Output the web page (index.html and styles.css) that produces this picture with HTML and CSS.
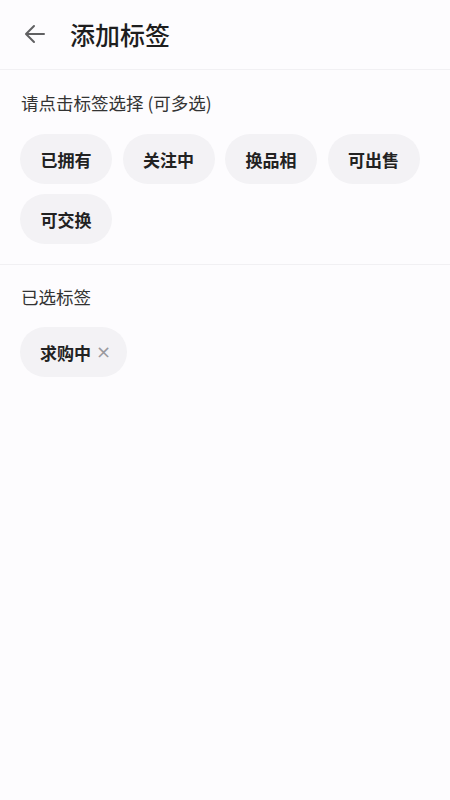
FILE: index.html
```html
<!DOCTYPE html>
<html lang="zh">
<head>
<meta charset="utf-8">
<link rel="stylesheet" href="styles.css">
</head>
<body>
<div class="page">
  <header class="header">
    <svg class="back" width="24" height="24" viewBox="0 0 24 24" fill="none" stroke="#606062" stroke-width="2" stroke-linecap="round" stroke-linejoin="round">
      <path d="M21 12H3.5M11 4l-8 8 8 8"/>
    </svg>
    <h1 class="title">添加标签</h1>
  </header>
  <section class="section">
    <div class="label">请点击标签选择 (可多选)</div>
    <div class="chips">
      <span class="chip">已拥有</span>
      <span class="chip">关注中</span>
      <span class="chip">换品相</span>
      <span class="chip">可出售</span>
      <span class="chip">可交换</span>
    </div>
  </section>
  <section class="section">
    <div class="label label2">已选标签</div>
    <div class="chips">
      <span class="chip chip-selected">求购中<span class="close">×</span></span>
    </div>
  </section>
</div>
</body>
</html>
```
FILE: styles.css
```css
html, body {
  margin: 0;
  padding: 0;
  background: #fdfcfe;
}
body {
  font-family: "Noto Sans CJK SC", "Noto Sans", sans-serif;
  color: #222;
}
.page {
  width: 450px;
  min-height: 800px;
}
.header {
  height: 70px;
  display: flex;
  align-items: center;
  border-bottom: 1px solid #f1f0f3;
  box-sizing: border-box;
  padding-left: 23px;
}
.back {
  width: 24px;
  height: 24px;
  margin-top: -2px;
}
.title {
  margin: -1px 0 0 23px;
  font-size: 25px;
  font-weight: 500;
  color: #1e1e1e;
  line-height: 34px;
}
.section {
  padding: 21px 20px 20px;
  border-bottom: 1px solid #f1f0f3;
}
.section:last-child {
  border-bottom: none;
}
.label {
  font-size: 17.5px;
  line-height: 24px;
  color: #333;
  margin-left: 1px;
}
.label2 {
  margin-top: -1px;
}
.chips {
  display: flex;
  flex-wrap: wrap;
  gap: 10px 10.5px;
  margin-top: 19px;
}
.label2 + .chips {
  margin-top: 18px;
}
.chip {
  height: 50px;
  box-sizing: border-box;
  padding: 0 20px;
  min-width: 92px;
  border-radius: 25px;
  background: #f3f2f5;
  font-size: 17px;
  font-weight: 700;
  color: #222;
  display: inline-flex;
  align-items: center;
  justify-content: center;
}
.chip-selected {
  padding: 0 16px 0 20px;
}
.close {
  font-weight: 400;
  color: #9a999e;
  font-size: 18px;
  margin-left: 5px;
  font-family: "DejaVu Sans", sans-serif;
  line-height: 1;
}
```
